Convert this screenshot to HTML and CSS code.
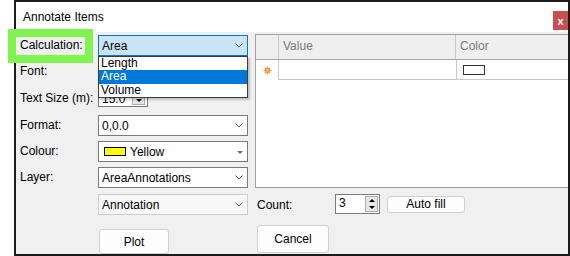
FILE: index.html
```html
<!DOCTYPE html>
<html lang="en">
<head>
<meta charset="UTF-8" />
<title>Annotate Items</title>
<link rel="stylesheet" href="styles.css">
</head>
<body>

<div class="screen">
  <div class="window">
    <div class="titlebar">
      <span class="title">Annotate Items</span>
      <span class="close">x</span>
    </div>

    <div class="body">
      <div class="form">
        <label class="lbl">Calculation:</label>
        <div class="combo combo-focus">
          <span>Area</span>
          <svg class="chev" width="8" height="5" viewBox="0 0 8 5"><polyline points="0.5,0.5 4,4 7.5,0.5" /></svg>
        </div>

        <label class="lbl">Font:</label>
        <div class="combo">
          <svg class="chev" width="8" height="5" viewBox="0 0 8 5"><polyline points="0.5,0.5 4,4 7.5,0.5" /></svg>
        </div>

        <label class="lbl">Text Size (m):</label>
        <div class="spin spin-size">
          <span class="size-val">15.0</span>
          <div class="spin-btn spin-btn-one">
            <span class="tri-down"></span>
          </div>
        </div>

        <label class="lbl">Format:</label>
        <div class="combo">
          <span>0,0.0</span>
          <svg class="chev" width="8" height="5" viewBox="0 0 8 5"><polyline points="0.5,0.5 4,4 7.5,0.5" /></svg>
        </div>

        <label class="lbl">Colour:</label>
        <div class="combo">
          <span class="swatch-yellow"></span>
          <span>Yellow</span>
          <span class="tri-small"></span>
        </div>

        <label class="lbl">Layer:</label>
        <div class="combo">
          <span>AreaAnnotations</span>
          <svg class="chev" width="8" height="5" viewBox="0 0 8 5"><polyline points="0.5,0.5 4,4 7.5,0.5" /></svg>
        </div>

        <span></span>
        <div class="combo combo-flat">
          <span>Annotation</span>
          <svg class="chev" width="8" height="5" viewBox="0 0 8 5"><polyline points="0.5,0.5 4,4 7.5,0.5" /></svg>
        </div>

        <span></span>
        <div class="plot-cell">
          <button class="btn btn-plot">Plot</button>
        </div>
      </div>

      <div class="side">
        <div class="grid-view">
          <div class="gv-head">
            <div class="gv-ind"></div>
            <div class="gv-col gv-value">Value</div>
            <div class="gv-col gv-color">Color</div>
          </div>
          <div class="gv-row">
            <div class="gv-ind">
              <svg width="9" height="9" viewBox="0 0 9 9" class="star">
                <path d="M4.5 0.5V8.5M0.5 4.5H8.5M1.7 1.7L7.3 7.3M7.3 1.7L1.7 7.3" />
                <circle cx="4.5" cy="4.5" r="2.2" />
              </svg>
            </div>
            <div class="gv-cell gv-value"></div>
            <div class="gv-cell gv-color"><span class="swatch-empty"></span></div>
          </div>
        </div>

        <div class="count-row">
          <span class="count-lbl">Count:</span>
          <div class="spin spin-count">
            <span>3</span>
            <div class="spin-btn">
              <span class="tri-up"></span>
              <span class="tri-down"></span>
            </div>
          </div>
          <button class="btn btn-auto">Auto fill</button>
        </div>

        <button class="btn btn-cancel">Cancel</button>
      </div>
    </div>
  </div>

  <!-- lista abierta del combo Calculation -->
  <ul class="dropdown">
    <li>Length</li>
    <li class="sel">Area</li>
    <li>Volume</li>
  </ul>

  <div class="highlight"></div>
</div>

</body>
</html>
```

FILE: styles.css
```css
body {
  margin: 0;
  font-family: "Liberation Sans", Arial, sans-serif;
  font-size: 12px;
  color: #000;
}
.screen {
  position: relative;
  width: 570px;
  height: 256px;
  background: #fff;
  overflow: hidden;
}
.window {
  margin-left: 14px;
  width: 556px;
  height: 256px;
  box-sizing: border-box;
  border: 2px solid #1b1b1b;
  background: #f0f0f0;
}
.titlebar {
  height: 30px;
  background: #fff;
  display: flex;
  align-items: center;
  justify-content: space-between;
}
.title {
  margin-left: 7px;
  margin-top: -1px;
  font-size: 12px;
}
.close {
  width: 15px;
  height: 19px;
  margin-top: 7px;
  background: #c75050;
  color: #fff;
  font-weight: bold;
  font-size: 11px;
  display: flex;
  align-items: center;
  justify-content: center;
}

.body {
  display: flex;
  padding-left: 4px;
}
.form {
  display: grid;
  grid-template-columns: 78px 150px;
  grid-template-rows: 26px 27px 27px 26px 26px 27px 35px 25px;
  align-items: start;
  padding-top: 3px;
}
.lbl {
  height: 21px;
  line-height: 21px;
  color: #000;
}
.combo {
  height: 21px;
  box-sizing: border-box;
  border: 1px solid #7a7a7a;
  background: #fff;
  display: flex;
  align-items: center;
  padding: 0 4px 0 3px;
  position: relative;
}
.combo-focus {
  background: #cce4f7;
  border-color: #0078d7;
}
.combo-flat {
  background: #f8f8f8;
  border-color: #cccccc;
}
.chev {
  position: absolute;
  right: 4px;
  top: 7px;
  fill: none;
  stroke: #606060;
  stroke-width: 1;
}
.swatch-yellow {
  width: 20px;
  height: 7px;
  border: 1px solid #000;
  background: #ffff00;
  margin: 0 4px 0 2px;
}
.tri-small {
  position: absolute;
  right: 4px;
  top: 9px;
  border-left: 3px solid transparent;
  border-right: 3px solid transparent;
  border-top: 3px solid #6d6d6d;
}

.spin {
  box-sizing: border-box;
  border: 1px solid #7a7a7a;
  background: #fff;
  display: flex;
  align-items: flex-start;
  position: relative;
}
.spin > span {
  padding-left: 3px;
  line-height: 16px;
}
.spin-size {
  width: 50px;
  height: 19px;
}
.spin-size .size-val {
  line-height: 20px;
}
.spin-btn {
  position: absolute;
  right: 1px;
  top: 1px;
  bottom: 1px;
  width: 13px;
  box-sizing: border-box;
  border: 1px solid #adadad;
  background: #e6e6e6;
  display: flex;
  flex-direction: column;
  align-items: center;
  justify-content: space-around;
}
.spin-btn-one {
  top: auto;
  height: 10px;
  right: 2px;
}
.tri-up {
  border-left: 3px solid transparent;
  border-right: 3px solid transparent;
  border-bottom: 3px solid #000;
}
.tri-down {
  border-left: 3px solid transparent;
  border-right: 3px solid transparent;
  border-top: 3px solid #000;
}

.plot-cell {
  padding-left: 1px;
}
.btn {
  font-family: "Liberation Sans", Arial, sans-serif;
  font-size: 12px;
  color: #000;
  background: #fdfdfd;
  border: 1px solid #d0d0d0;
  border-radius: 3px;
  padding: 0;
}
.btn-plot {
  width: 70px;
  height: 25px;
}

.side {
  margin-left: 7px;
  width: 313px;
}
.grid-view {
  margin-top: 2px;
  height: 154px;
  box-sizing: border-box;
  border: 1px solid #a0a0a0;
  border-right: none;
  background: #fff;
}
.gv-head,
.gv-row {
  display: flex;
}
.gv-head {
  height: 24px;
  background: #efefef;
  border-bottom: 1px solid #a8a8a8;
}
.gv-row {
  height: 20px;
}
.gv-ind {
  width: 22px;
  border-right: 1px solid #c8c8c8;
  display: flex;
  align-items: center;
  justify-content: center;
}
.gv-head .gv-ind {
  background: #efefef;
}
.gv-row .gv-ind {
  border-right: none;
}
.gv-col {
  color: #7a7a7a;
  line-height: 23px;
  padding-left: 4px;
  font-size: 12px;
}
.gv-value {
  width: 177px;
  border-right: 1px solid #c8c8c8;
  box-sizing: border-box;
}
.gv-color {
  flex: 1;
}
.gv-cell {
  border-bottom: 1px solid #c8c8c8;
  border-left: 1px solid #c8c8c8;
  box-sizing: border-box;
  display: flex;
  align-items: center;
}
.gv-cell.gv-value {
  border-right: none;
  width: 178px;
}
.gv-cell.gv-color {
  padding-left: 6px;
}
.swatch-empty {
  width: 20px;
  height: 8px;
  border: 1px solid #333;
  background: #fff;
}
.star {
  stroke: #f39a45;
  stroke-width: 1.2;
  fill: #f7b05a;
}

.count-row {
  display: flex;
  align-items: center;
  margin-top: 6px;
  height: 20px;
}
.count-lbl {
  width: 78px;
  padding-left: 2px;
  margin-top: 2px;
}
.spin-count {
  width: 45px;
  height: 20px;
}
.btn-auto {
  width: 78px;
  height: 17px;
  margin-left: 7px;
}
.btn-cancel {
  display: block;
  margin-top: 11px;
  margin-left: 2px;
  width: 72px;
  height: 28px;
}

.dropdown {
  position: absolute;
  left: 98px;
  top: 56px;
  width: 150px;
  box-sizing: border-box;
  margin: 0;
  padding: 0;
  list-style: none;
  border: 1px solid #3c3c3c;
  background: #fff;
  box-shadow: 2px 2px 2px rgba(0, 0, 0, 0.2);
}
.dropdown li {
  height: 13px;
  line-height: 13px;
  padding-left: 2px;
}
.dropdown li.sel {
  background: #0078d7;
  color: #fff;
  height: 14px;
}

.highlight {
  position: absolute;
  left: 8px;
  top: 29px;
  width: 85px;
  height: 34px;
  box-sizing: border-box;
  border: 8px solid #80f34f;
}
```
